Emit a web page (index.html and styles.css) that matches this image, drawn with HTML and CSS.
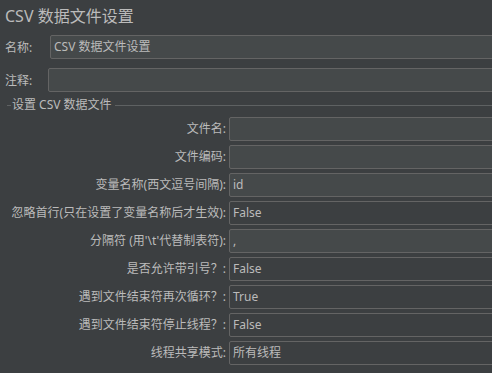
FILE: index.html
```html
<!DOCTYPE html>
<html lang="zh-CN">
<head>
<meta charset="UTF-8" />
<meta name="viewport" content="width=device-width, initial-scale=1" />
<title>CSV 数据文件设置</title>
<link rel="stylesheet" href="styles.css">
</head>
<body>
<div class="panel">

  <h1 class="title">CSV 数据文件设置</h1>

  <div class="name-row">
    <label class="name-label">名称:</label>
    <div class="field edit">CSV 数据文件设置</div>
  </div>

  <div class="name-row comment">
    <label class="name-label">注释:</label>
    <div class="field edit"></div>
  </div>

  <div class="group-title">设置 CSV 数据文件</div>

  <div class="form-grid">
    <label>文件名:</label>
    <div class="field edit"></div>

    <label>文件编码:</label>
    <div class="field edit"></div>

    <label>变量名称(西文逗号间隔):</label>
    <div class="field edit">id</div>

    <label>忽略首行(只在设置了变量名称后才生效):</label>
    <div class="field combo">False</div>

    <label>分隔符 (用'\t'代替制表符):</label>
    <div class="field edit">,</div>

    <label>是否允许带引号？:</label>
    <div class="field combo">False</div>

    <label>遇到文件结束符再次循环？:</label>
    <div class="field combo">True</div>

    <label>遇到文件结束符停止线程？:</label>
    <div class="field combo">False</div>

    <label>线程共享模式:</label>
    <div class="field combo">所有线程</div>
  </div>

</div>
</body>
</html>
```

FILE: styles.css
```css
body {
  margin: 0;
  background-color: #3c3f41;
  color: #bbbbbb;
  font-family: "Noto Sans", "Noto Sans CJK SC", sans-serif;
  font-size: 12px;
  overflow: hidden;
}

.panel {
  display: flex;
  flex-direction: column;
}

.title {
  margin: 0;
  padding: 4px 5px 7px;
  font-size: 16px;
  font-weight: normal;
  line-height: 24px;
}

.name-row {
  display: flex;
  align-items: center;
}

.name-row.comment {
  margin-top: 9px;
}

.name-label {
  width: 50px;
  padding-left: 5px;
  box-sizing: border-box;
  flex-shrink: 0;
}

.comment .name-label {
  width: 48px;
}

.name-row .field {
  flex: 1;
}

.field {
  height: 24px;
  box-sizing: border-box;
  border: 1px solid #646464;
  border-radius: 2px;
  margin-right: -4px;
  padding-left: 3px;
  line-height: 22px;
  white-space: nowrap;
}

.field.edit {
  background-color: #45494a;
}

.field.combo {
  background-color: #3c3f41;
}

/* titled border of the group */
.group-title {
  display: flex;
  align-items: center;
  height: 25px;
  line-height: 25px;
}

.group-title::before,
.group-title::after {
  content: "";
  height: 1px;
  margin-top: 2px;
  background-color: #5e6162;
}

.group-title::before {
  width: 4px;
  margin-left: 7px;
  margin-right: 1px;
}

.group-title::after {
  flex: 1;
  margin-left: 3px;
}

.form-grid {
  display: grid;
  grid-template-columns: 226px 1fr;
  grid-auto-rows: 24px;
  column-gap: 3px;
  row-gap: 4px;
}

.form-grid label {
  text-align: right;
  line-height: 24px;
  white-space: nowrap;
}
```
